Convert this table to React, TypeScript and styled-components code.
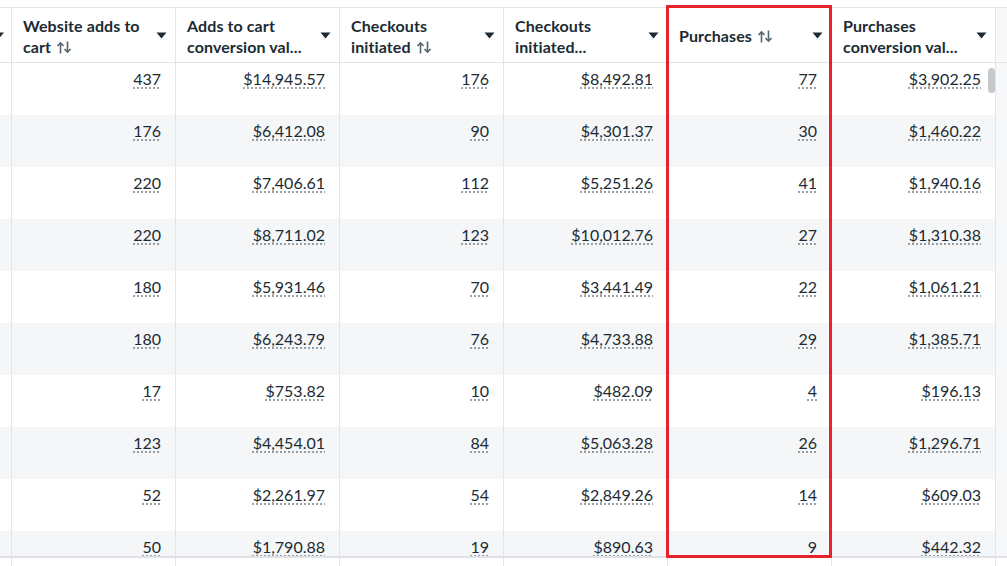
import React from 'react'
import styled, { createGlobalStyle } from 'styled-components'

const GlobalStyle = createGlobalStyle`
  html, body {
    margin: 0;
    padding: 0;
    background: #fff;
  }
  body {
    font-family: Lato, "Open Sans", Arial, sans-serif;
    color: #1c2b33;
  }
`

type Row = [string, string, string, string, string, string]

const ROWS: Row[] = [
  ['437', '$14,945.57', '176', '$8,492.81', '77', '$3,902.25'],
  ['176', '$6,412.08', '90', '$4,301.37', '30', '$1,460.22'],
  ['220', '$7,406.61', '112', '$5,251.26', '41', '$1,940.16'],
  ['220', '$8,711.02', '123', '$10,012.76', '27', '$1,310.38'],
  ['180', '$5,931.46', '70', '$3,441.49', '22', '$1,061.21'],
  ['180', '$6,243.79', '76', '$4,733.88', '29', '$1,385.71'],
  ['17', '$753.82', '10', '$482.09', '4', '$196.13'],
  ['123', '$4,454.01', '84', '$5,063.28', '26', '$1,296.71'],
  ['52', '$2,261.97', '54', '$2,849.26', '14', '$609.03'],
  ['50', '$1,790.88', '19', '$890.63', '9', '$442.32'],
]

const COLUMNS = [
  { lines: ['Website adds to', 'cart'], sortable: true },
  { lines: ['Adds to cart', 'conversion val...'], sortable: false },
  { lines: ['Checkouts', 'initiated'], sortable: true },
  { lines: ['Checkouts', 'initiated...'], sortable: false },
  { lines: ['Purchases'], sortable: true },
  { lines: ['Purchases', 'conversion val...'], sortable: false },
]

const GRID = '12px repeat(6, 164px) 12px'
const BORDER = '#e3e5e8'

const Page = styled.div`
  position: relative;
  width: 1007px;
  height: 566px;
  overflow: hidden;
  padding-top: 7px;
  box-sizing: border-box;
`

const Header = styled.div`
  display: grid;
  grid-template-columns: ${GRID};
  height: 56px;
  border-top: 1px solid ${BORDER};
  border-bottom: 1px solid ${BORDER};
  box-sizing: border-box;
`

const HeadCell = styled.div`
  display: flex;
  align-items: center;
  justify-content: space-between;
  padding: 1px 8px 0 11px;
  border-right: 1px solid ${BORDER};
  overflow: hidden;
  min-width: 0;
`

const EdgeHead = styled.div`
  display: flex;
  align-items: center;
  border-right: 1px solid ${BORDER};
  overflow: hidden;
  min-width: 0;
`

const TrackCell = styled.div`
  background: #f7f8f9;
  border-right: 1px solid ${BORDER};
  min-width: 0;
`

const HeadLabel = styled.div`
  font-size: 16px;
  font-weight: 700;
  line-height: 21px;
  letter-spacing: 0.1px;
  color: #1c2b33;
  white-space: nowrap;
`

const Body = styled.div`
  height: 495px;
  overflow: hidden;
  border-bottom: 2px solid #e0e2e5;
  box-sizing: border-box;
`

const BodyRow = styled.div<{ $shaded: boolean }>`
  display: grid;
  grid-template-columns: ${GRID};
  height: 52px;
  background: ${(p) => (p.$shaded ? '#f5f6f7' : '#fff')};
`

const EdgeCell = styled.div`
  border-right: 1px solid ${BORDER};
  min-width: 0;
`

const Cell = styled.div`
  border-right: 1px solid ${BORDER};
  padding: 6px 14px 0 0;
  text-align: right;
  font-size: 16px;
  line-height: 20px;
  color: #1c2b33;
  min-width: 0;
`

const Value = styled.span`
  text-decoration: underline dotted #7d8a96;
  text-underline-offset: 3px;
`

const FooterRow = styled.div`
  display: grid;
  grid-template-columns: ${GRID};
  height: 20px;
`

const FooterCell = styled.div`
  border-right: 1px solid ${BORDER};
  min-width: 0;
`

const Thumb = styled.div`
  position: absolute;
  left: 988px;
  top: 68px;
  width: 7px;
  height: 25px;
  border-radius: 4px;
  background: #c6c8cb;
`

const Highlight = styled.div`
  position: absolute;
  left: 666px;
  top: 5px;
  width: 166px;
  height: 553px;
  border: 3px solid #e8222b;
  box-sizing: border-box;
  pointer-events: none;
`

const SortIcon = () => (
  <svg width="16" height="13" viewBox="0 0 16 13" style={{ marginLeft: 5, verticalAlign: '-1px' }}>
    <path d="M4.5 12.5V2M1.5 5L4.5 1.8 7.5 5" fill="none" stroke="#56646e" strokeWidth="1.6" />
    <path d="M11.5 0.5V11M8.5 8l3 3.2 3-3.2" fill="none" stroke="#56646e" strokeWidth="1.6" />
  </svg>
)

const Caret = () => (
  <svg width="11" height="7" viewBox="0 0 11 7">
    <path d="M0.5 0.5h10L5.5 6.5z" fill="#1c2b33" />
  </svg>
)

const EdgeCaret = () => (
  <svg width="4" height="7" viewBox="0 0 4 7">
    <path d="M-6 0.5h10L-1 6.5z" fill="#1c2b33" />
  </svg>
)

export default function App() {
  return (
    <Page>
      <GlobalStyle />
      <Header>
        <EdgeHead>
          <EdgeCaret />
        </EdgeHead>
        {COLUMNS.map((col, i) => (
          <HeadCell key={i}>
            <HeadLabel>
              {col.lines.map((line, j) => (
                <div key={j}>
                  {line}
                  {col.sortable && j === col.lines.length - 1 && <SortIcon />}
                </div>
              ))}
            </HeadLabel>
            <Caret />
          </HeadCell>
        ))}
        <TrackCell />
      </Header>
      <Body>
        {ROWS.map((row, i) => (
          <BodyRow key={i} $shaded={i % 2 === 1}>
            <EdgeCell />
            {row.map((v, j) => (
              <Cell key={j}>
                <Value>{v}</Value>
              </Cell>
            ))}
            <TrackCell />
          </BodyRow>
        ))}
      </Body>
      <FooterRow>
        {Array.from({ length: 8 }).map((_, i) => (
          <FooterCell key={i} />
        ))}
      </FooterRow>
      <Thumb />
      <Highlight />
    </Page>
  )
}
